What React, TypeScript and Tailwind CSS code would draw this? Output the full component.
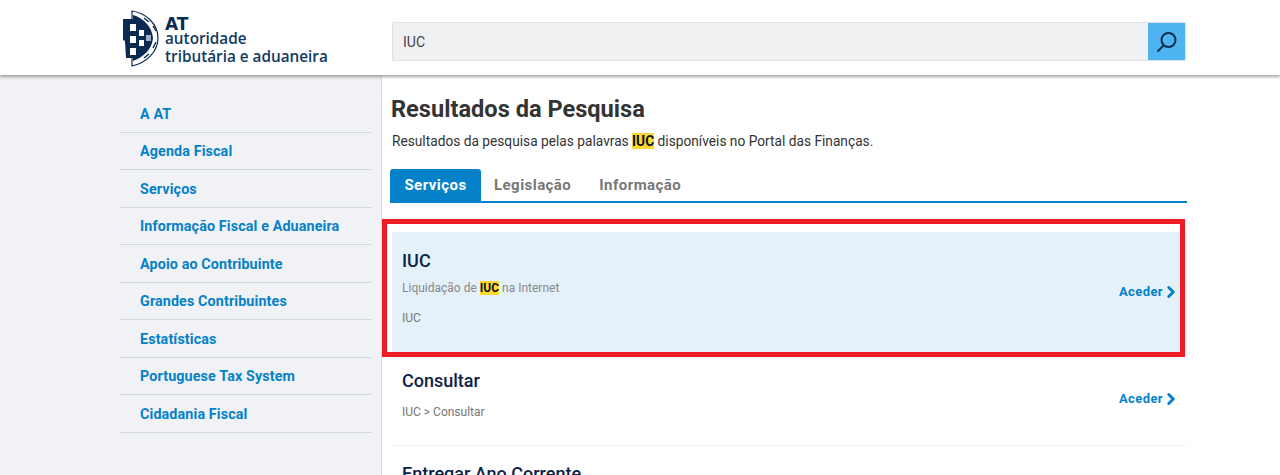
import { ChevronRight } from "lucide-react";

const navItems = [
  "A AT",
  "Agenda Fiscal",
  "Serviços",
  "Informação Fiscal e Aduaneira",
  "Apoio ao Contribuinte",
  "Grandes Contribuintes",
  "Estatísticas",
  "Portuguese Tax System",
  "Cidadania Fiscal",
];

const Logo = () => (
  <div className="flex items-start pl-[2px]">
    <svg width="38" height="59" viewBox="0 0 38 59" className="mt-[9px]">
      {/* esfera armilar */}
      <path d="M10 2C24 4 36 15 36 29S24 54 10 57Z" fill="#fff" stroke="#0b2a52" strokeWidth="1.2" />
      <path d="M22 9l5 4M31 17l3 5M34 33l-3 6M27 45l-5 4" stroke="#0b2a52" strokeWidth="1.4" />
      {/* escudo */}
      <path d="M1 10H11V6C21 9 30 17 31 29C30 40 22 48 11 52V49H4L3 32L1 31Z" fill="#0b2a52" />
      <rect x="8" y="15" width="6" height="7" fill="#fff" />
      <rect x="8" y="27" width="6" height="7" fill="#fff" />
      <rect x="8" y="39" width="6" height="7" fill="#fff" />
      <rect x="17" y="21" width="5" height="6" fill="#fff" />
      <rect x="17" y="31" width="5" height="6" fill="#fff" />
      <path d="M24 26h5v6h-5z" fill="#9fb0c4" />
    </svg>
    <div className="ml-[5px] mt-[17px] font-['Open_Sans',sans-serif] font-semibold text-[#123a63]">
      <div className="font-['DejaVu_Sans',sans-serif] text-[17px] font-bold leading-[14px] text-[#0b2a52]">AT</div>
      <div className="text-[15.3px] leading-[14px]">autoridade</div>
      <div className="mt-[3px] text-[15.3px] leading-[16px]">tributária e aduaneira</div>
    </div>
  </div>
);

const Mark = () => (
  <mark className="bg-[#fdd835] font-bold text-[#111]">IUC</mark>
);

const Aceder = () => (
  <a className="flex items-center text-[13px] font-bold tracking-[0.4px] text-[#0581c9]">
    Aceder
    <ChevronRight size={18} strokeWidth={4} className="-mr-[3px] ml-[-1px]" />
  </a>
);

export default function App() {
  return (
    <div className="relative h-[475px] overflow-hidden bg-white font-['Roboto',sans-serif]">
      <header className="relative z-10 flex h-[75px] bg-white pl-[120px] pr-[94px] shadow-[0_2px_3px_rgba(0,0,0,0.35)]">
        <div className="w-[272px]">
          <Logo />
        </div>
        <div className="mt-[22px] flex h-[39px] flex-1 rounded-[2px] border border-[#dfe1e4] bg-[#f0f1f3]">
          <span className="flex-1 pl-[10px] text-[14px] leading-[38px] text-[#444]">IUC</span>
          <button className="flex w-[37px] items-center justify-center bg-[#4db3f1]">
            <svg width="24" height="24" viewBox="0 0 24 24" fill="none" stroke="#0b2f4f" strokeWidth="2">
              <circle cx="13.5" cy="10" r="7" />
              <path d="M8.5 15.5 3 21" strokeLinecap="round" />
            </svg>
          </button>
        </div>
      </header>

      <div className="flex h-[400px]">
        <aside className="w-[382px] shrink-0 border-r border-[#d9dcdf] bg-[#f0f2f5] pl-[120px] pr-[10px] pt-[20px]">
          <ul>
            {navItems.map((item) => (
              <li
                key={item}
                className="flex h-[37.5px] items-center border-b border-[#d3d6da] pl-[20px] pt-[2px] text-[14.3px] font-bold tracking-[0.13px] text-[#0581c9]"
              >
                {item}
              </li>
            ))}
          </ul>
        </aside>

        <main className="min-w-0 flex-1 pl-[8px] pr-[93px] pt-[20px]">
          <h1 className="pl-px text-[23.6px] font-bold leading-[28px] text-[#333]">Resultados da Pesquisa</h1>
          <p className="mt-[8px] pl-[2px] text-[13.73px] leading-[20px] text-[#333]">
            Resultados da pesquisa pelas palavras <Mark /> disponíveis no Portal das Finanças.
          </p>

          <div className="mt-[18px] flex h-[34px] border-b-2 border-[#0581c9] text-[15px] font-bold tracking-[0.45px]">
            <span className="flex w-[91px] items-center justify-center rounded-t-[3px] bg-[#0581c9] text-white">Serviços</span>
            <span className="ml-[13px] flex items-center text-[#777]">Legislação</span>
            <span className="ml-[28px] flex items-center text-[#777]">Informação</span>
          </div>

          <div className="ml-[2px] mt-[29px] flex h-[120px] items-center justify-between bg-[#e4f1f9] pl-[10px] pr-[10px]">
            <div className="-mt-[8px]">
              <h2 className="text-[18px] font-medium leading-[22px] text-[#0b2349]">IUC</h2>
              <p className="mt-[7px] text-[12px] leading-[18px] text-[#888]">
                Liquidação de <Mark /> na Internet
              </p>
              <p className="mt-[12px] text-[12px] leading-[18px] text-[#777]">IUC</p>
            </div>
            <Aceder />
          </div>

          <div className="ml-[2px] flex h-[94px] items-center justify-between border-b border-[#f0f1f3] pl-[10px] pr-[10px]">
            <div className="-mt-[6px]">
              <h2 className="text-[18px] font-medium leading-[22px] text-[#0b2349]">Consultar</h2>
              <p className="mt-[11px] text-[12px] leading-[18px] text-[#777]">IUC &gt; Consultar</p>
            </div>
            <Aceder />
          </div>

          <div className="ml-[2px] pl-[10px] pt-[17px]">
            <h2 className="text-[18px] font-medium leading-[22px] text-[#0b2349]">Entregar Ano Corrente</h2>
          </div>
        </main>
      </div>

      {/* marcação vermelha por cima do primeiro resultado */}
      <div className="pointer-events-none absolute left-[382px] top-[219px] h-[138px] w-[803px] border-[5px] border-[#ed1c24]" />
    </div>
  );
}
